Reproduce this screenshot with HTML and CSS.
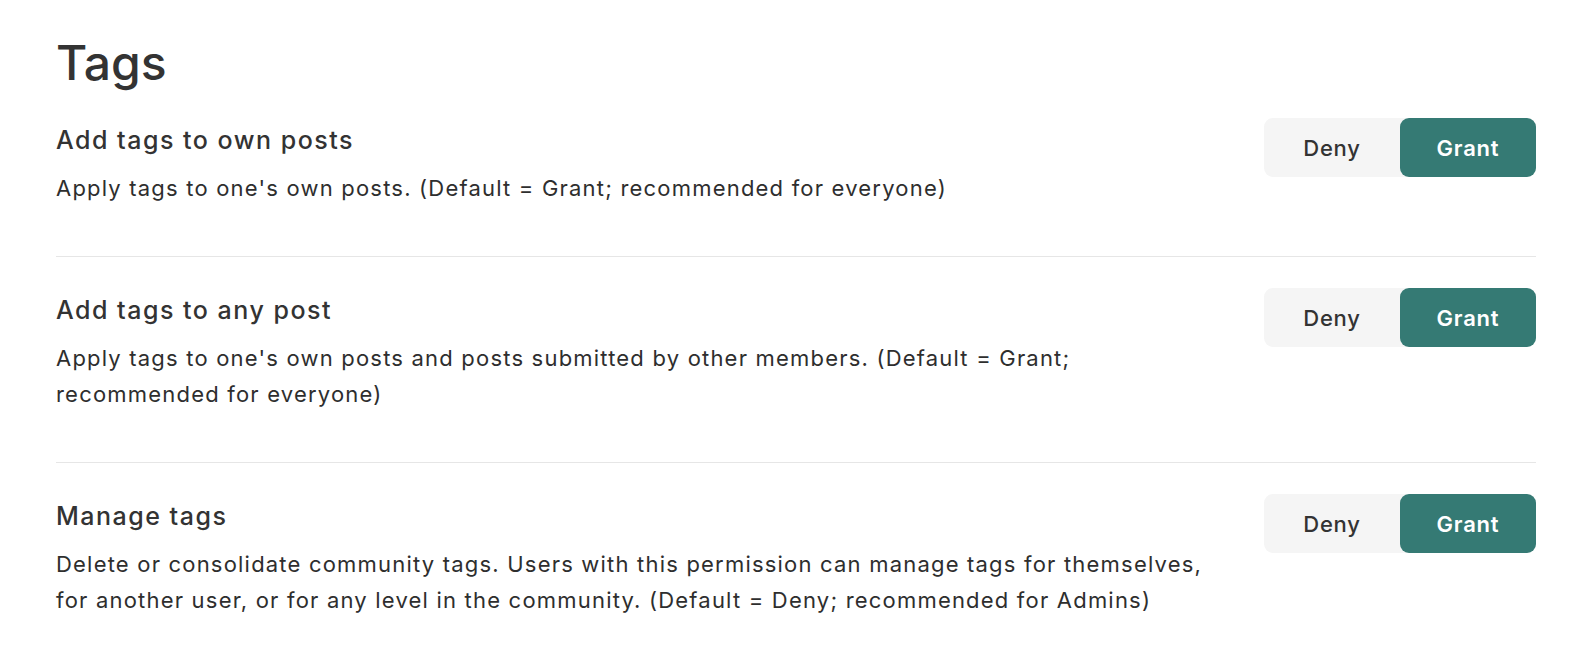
FILE: index.html
```html
<!DOCTYPE html>
<html lang="en">
<head>
  <meta charset="UTF-8" />
  <title>Tags permissions</title>
  <link rel="stylesheet" href="styles.css">
</head>
<body>
<div class="container">
  <h1 class="page-title">Tags</h1>

  <div class="perm-row">
    <div class="perm-text">
      <div class="perm-name">Add tags to own posts</div>
      <div class="perm-desc">Apply tags to one's own posts. (Default = Grant; recommended for everyone)</div>
    </div>
    <div class="toggle">
      <button class="toggle-btn">Deny</button>
      <button class="toggle-btn active">Grant</button>
    </div>
  </div>

  <div class="perm-row">
    <div class="perm-text">
      <div class="perm-name">Add tags to any post</div>
      <div class="perm-desc">Apply tags to one's own posts and posts submitted by other members. (Default = Grant; recommended for everyone)</div>
    </div>
    <div class="toggle">
      <button class="toggle-btn">Deny</button>
      <button class="toggle-btn active">Grant</button>
    </div>
  </div>

  <div class="perm-row">
    <div class="perm-text">
      <div class="perm-name">Manage tags</div>
      <div class="perm-desc">Delete or consolidate community tags. Users with this permission can manage tags for themselves, for another user, or for any level in the community. (Default = Deny; recommended for Admins)</div>
    </div>
    <div class="toggle">
      <button class="toggle-btn">Deny</button>
      <button class="toggle-btn active">Grant</button>
    </div>
  </div>
</div>
</body>
</html>
```

FILE: styles.css
```css
body {
  margin: 0;
  background: #fff;
  font-family: Inter, "Noto Sans", sans-serif;
  color: #333;
}

.container {
  padding: 34px 46px 0 56px;
}

.page-title {
  margin: 0 0 26px;
  font-size: 48px;
  line-height: 58px;
  font-weight: 500;
  color: #333;
}

.perm-row {
  display: flex;
  justify-content: space-between;
  align-items: flex-start;
  padding: 31px 0 50px;
  border-bottom: 1px solid #e6e6e6;
}

.perm-row:first-of-type {
  padding-top: 0;
}

.perm-row:last-child {
  border-bottom: none;
}

.perm-text {
  margin-top: 6px;
  max-width: 1160px;
}

.perm-name {
  font-size: 25px;
  line-height: 32px;
  font-weight: 500;
  letter-spacing: 1.5px;
}

.perm-desc {
  margin-top: 14px;
  font-size: 22px;
  line-height: 36px;
  letter-spacing: 1.2px;
  color: #2e2e2e;
}

.toggle {
  display: flex;
  flex-shrink: 0;
  background: #f5f5f5;
  border-radius: 9px;
}

.toggle-btn {
  width: 136px;
  height: 59px;
  border: none;
  border-radius: 9px;
  background: transparent;
  font-family: inherit;
  font-size: 22px;
  font-weight: 500;
  letter-spacing: 0.8px;
  color: #333;
  cursor: pointer;
}

.toggle-btn.active {
  background: #357a74;
  color: #fff;
  font-weight: 600;
}
```
